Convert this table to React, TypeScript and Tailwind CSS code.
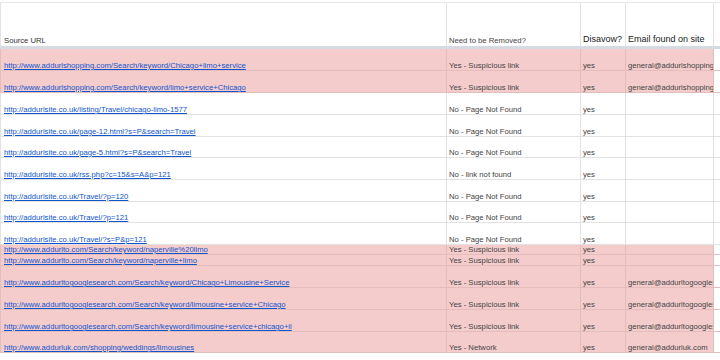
import React from "react";

type Row = {
  url: string;
  need: string;
  dis: string;
  email: string;
  pink: boolean;
  h: string;
};

const rows: Row[] = [
  { url: "http://www.addurlshopping.com/Search/keyword/Chicago+limo+service", need: "Yes - Suspicious link", dis: "yes", email: "general@addurlshopping.com", pink: true, h: "h-[22px]" },
  { url: "http://www.addurlshopping.com/Search/keyword/limo+service+Chicago", need: "Yes - Suspicious link", dis: "yes", email: "general@addurlshopping.com", pink: true, h: "h-[22px]" },
  { url: "http://addurlsite.co.uk/listing/Travel/chicago-limo-1577", need: "No - Page Not Found", dis: "yes", email: "", pink: false, h: "h-[22px]" },
  { url: "http://addurlsite.co.uk/page-12.html?s=P&search=Travel", need: "No - Page Not Found", dis: "yes", email: "", pink: false, h: "h-[22px]" },
  { url: "http://addurlsite.co.uk/page-5.html?s=P&search=Travel", need: "No - Page Not Found", dis: "yes", email: "", pink: false, h: "h-[21px]" },
  { url: "http://addurlsite.co.uk/rss.php?c=15&s=A&p=121", need: "No - link not found", dis: "yes", email: "", pink: false, h: "h-[22px]" },
  { url: "http://addurlsite.co.uk/Travel/?p=120", need: "No - Page Not Found", dis: "yes", email: "", pink: false, h: "h-[22px]" },
  { url: "http://addurlsite.co.uk/Travel/?p=121", need: "No - Page Not Found", dis: "yes", email: "", pink: false, h: "h-[21px]" },
  { url: "http://addurlsite.co.uk/Travel/?s=P&p=121", need: "No - Page Not Found", dis: "yes", email: "", pink: false, h: "h-[22px]" },
  { url: "http://www.addurlto.com/Search/keyword/naperville%20limo", need: "Yes - Suspicious link", dis: "yes", email: "", pink: true, h: "h-[10px]" },
  { url: "http://www.addurlto.com/Search/keyword/naperville+limo", need: "Yes - Suspicious link", dis: "yes", email: "", pink: true, h: "h-[11px]" },
  { url: "http://www.addurltogooglesearch.com/Search/keyword/Chicago+Limousine+Service", need: "Yes - Suspicious link", dis: "yes", email: "general@addurltogooglesearch.com", pink: true, h: "h-[22px]" },
  { url: "http://www.addurltogooglesearch.com/Search/keyword/limousine+service+Chicago", need: "Yes - Suspicious link", dis: "yes", email: "general@addurltogooglesearch.com", pink: true, h: "h-[22px]" },
  { url: "http://www.addurltogooglesearch.com/Search/keyword/limousine+service+chicago+il", need: "Yes - Suspicious link", dis: "yes", email: "general@addurltogooglesearch.com", pink: true, h: "h-[22px]" },
  { url: "http://www.addurluk.com/shopping/weddings/limousines", need: "Yes - Network", dis: "yes", email: "general@addurluk.com", pink: true, h: "h-[21px]" },
];

export default function App() {
  return (
    <div
      className="w-[720px] h-[360px] bg-white overflow-hidden text-[#444]"
      style={{ fontFamily: '"Liberation Sans", Arial, sans-serif' }}
    >
      <div className="h-[2px]" />
      {/* header */}
      <div className="flex h-[44px] border-t border-[#e6e6e6]">
        <div className="w-[447px] shrink-0 border-l border-r border-[#e2e2e2] flex items-end px-[3px] pb-[1px] text-[7.7px] leading-[9px] text-[#333]">
          Source URL
        </div>
        <div className="w-[134px] shrink-0 border-r border-[#e2e2e2] flex items-end px-[2px] pb-[1px] text-[7.7px] leading-[9px] text-[#444]">
          Need to be Removed?
        </div>
        <div className="w-[45px] shrink-0 border-r border-[#e2e2e2] flex items-end px-[2px] pb-[1px] text-[9px] leading-[11px] text-[#222]">
          Disavow?
        </div>
        <div className="w-[88px] shrink-0 border-r border-[#e2e2e2] flex items-end px-[2px] pb-[1px] text-[9px] leading-[11px] text-[#222] whitespace-nowrap overflow-hidden">
          Email found on site
        </div>
        <div className="flex-1" />
      </div>
      <div className="h-[3px] bg-[#d6dae1]" />
      {rows.map((r, i) => {
        const bg = r.pink ? "bg-[#f4cccc]" : "bg-white";
        const line = r.pink ? "border-[#e3bcbc]" : "border-[#e2e2e2]";
        return (
          <div key={i} className={`flex ${r.h} ${bg} border-b ${line} text-[7.7px] leading-[8px] whitespace-nowrap`}>
            <div className={`w-[447px] shrink-0 border-l border-r ${line} flex items-end px-[3px] overflow-hidden`}>
              <span className="text-[#1155cc] underline">{r.url}</span>
            </div>
            <div className={`w-[134px] shrink-0 border-r ${line} flex items-end px-[2px] overflow-hidden text-[#444]`}>
              {r.need}
            </div>
            <div className={`w-[45px] shrink-0 border-r ${line} flex items-end px-[2px] overflow-hidden text-[#444]`}>
              {r.dis}
            </div>
            <div className={`w-[88px] shrink-0 border-r ${line} flex items-end px-[2px] overflow-hidden text-[#444]`}>
              {r.email}
            </div>
            <div className="flex-1 bg-white" />
          </div>
        );
      })}
    </div>
  );
}
